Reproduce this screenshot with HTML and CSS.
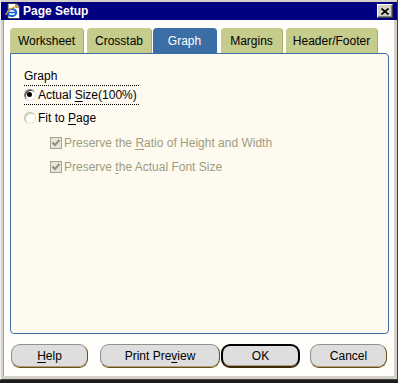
FILE: index.html
```html
<!DOCTYPE html>
<html>
<head>
<meta charset="utf-8">
<link rel="stylesheet" href="styles.css">
</head>
<body>
<div class="window">
  <div class="titlebar">
    <svg class="app-icon" width="16" height="16" viewBox="0 0 16 16">
      <path d="M3 0.5h8l3.5 3.5v11.5h-11.5z" fill="#fff" stroke="#404040"/>
      <path d="M11 0.5v3.5h3.5" fill="#e0e0e0" stroke="#404040"/>
      <ellipse cx="7" cy="9.5" rx="4.2" ry="3.6" fill="none" stroke="#1060e0" stroke-width="2"/>
      <path d="M3.5 9.5h7" stroke="#1060e0" stroke-width="1.6"/>
      <path d="M0.5 12c2-5 8-9 13-8" fill="none" stroke="#f0a020" stroke-width="1.2"/>
    </svg>
    <span class="title">Page Setup</span>
    <span class="close">
      <svg width="8" height="7" viewBox="0 0 8 7"><path d="M0.5 0.5l7 6M7.5 0.5l-7 6" stroke="#000" stroke-width="1.6"/></svg>
    </span>
  </div>
  <div class="client">
    <div class="tabs">
      <div class="tab tab-worksheet">Worksheet</div>
      <div class="tab tab-crosstab">Crosstab</div>
      <div class="tab tab-graph selected">Graph</div>
      <div class="tab tab-margins">Margins</div>
      <div class="tab tab-header">Header/Footer</div>
    </div>
    <div class="panel">
      <div class="group-label">Graph</div>
      <div class="option focused"><span class="radio checked"></span><span>Actual <u>S</u>ize(100%)</span></div>
      <div class="option option-fit"><span class="radio"></span><span>Fit to <u>P</u>age</span></div>
      <div class="option sub disabled option-ratio">
        <svg class="check" width="12" height="12" viewBox="0 0 12 12"><rect x="0.5" y="0.5" width="11" height="11" fill="#e6e6d8" stroke="#a4a48c"/><path d="M2.5 5.5l2.5 2.5 4.5-5" fill="none" stroke="#8a927a" stroke-width="2"/></svg>
        <span>Preserve the <u>R</u>atio of Height and Width</span>
      </div>
      <div class="option sub disabled option-font">
        <svg class="check" width="12" height="12" viewBox="0 0 12 12"><rect x="0.5" y="0.5" width="11" height="11" fill="#e6e6d8" stroke="#a4a48c"/><path d="M2.5 5.5l2.5 2.5 4.5-5" fill="none" stroke="#8a927a" stroke-width="2"/></svg>
        <span>Preserve <u>t</u>he Actual Font Size</span>
      </div>
    </div>
    <div class="buttons">
      <div class="btn btn-help"><u>H</u>elp</div>
      <div class="btn btn-preview">Print Pre<u>v</u>iew</div>
      <div class="btn btn-ok default">OK</div>
      <div class="btn btn-cancel">Cancel</div>
    </div>
  </div>
</div>
</body>
</html>
```
FILE: styles.css
```css
html, body {
  margin: 0;
  padding: 0;
}
body {
  width: 398px;
  height: 383px;
  overflow: hidden;
  background: #1c1c1c;
  font-family: "Liberation Sans", Arial, sans-serif;
  font-size: 12px;
  color: #000;
}
.window {
  width: 398px;
  height: 380px;
  box-sizing: border-box;
  background: #d4d0c8;
  border-left: 1px solid #f0f0f0;
  border-right: 1px solid #404040;
  border-bottom: 1px solid #404040;
  padding: 2px 0 3px 0;
  display: flex;
  flex-direction: column;
}
.titlebar {
  height: 18px;
  background: #000080;
  display: flex;
  align-items: center;
  padding: 0 4px 0 4px;
  color: #fff;
}
.app-icon {
  flex: none;
  margin-right: 2px;
}
.title {
  font-weight: bold;
  font-size: 12px;
  flex: 1;
}
.close {
  width: 16px;
  height: 14px;
  box-sizing: border-box;
  background: #d4d0c8;
  border: 1px solid;
  border-color: #fff #404040 #404040 #fff;
  box-shadow: inset -1px -1px 0 #808080;
  display: flex;
  align-items: center;
  justify-content: center;
}
.client {
  flex: 1;
  margin: 0 3px 0 2px;
  border-left: 1px solid #a0a0a0;
  background: #fffefb;
  padding: 8px 0 0 6px;
}
.tabs {
  display: flex;
  height: 25px;
  gap: 3px;
}
.tab {
  box-sizing: border-box;
  height: 25px;
  background: #c6cc8c;
  border-radius: 4px 4px 0 0;
  border-right: 1px solid #a8ae70;
  display: flex;
  align-items: center;
  justify-content: center;
  padding-top: 1px;
}
.tab-worksheet { width: 74px; }
.tab-crosstab { width: 65px; margin-right: -2px; }
.tab-graph { width: 64px; margin-right: 1px; }
.tab-margins { width: 62px; }
.tab-header { width: 92px; }
.tab.selected {
  background: #3b6ea5;
  border-right-color: #3b6ea5;
  color: #fff;
}
.panel {
  box-sizing: border-box;
  width: 379px;
  height: 281px;
  background: #fffaf0;
  border: 1px solid #3b6ea5;
  border-radius: 0 4px 4px 4px;
  padding: 15px 12px 0 13px;
  display: flex;
  flex-direction: column;
  align-items: flex-start;
}
.group-label {
  line-height: 14px;
  height: 14px;
}
.option {
  display: flex;
  align-items: center;
  line-height: 14px;
  height: 14px;
}
.option.focused {
  margin-top: 2px;
  height: 18px;
  border-top: 1px dotted #000;
  border-bottom: 1px dotted #000;
  padding-right: 2px;
}
.option-fit { margin-top: 6px; }
.option-ratio { margin-top: 11px; }
.option-font { margin-top: 10px; }
.option.sub { margin-left: 26px; }
.option.disabled { color: #9c9c7e; }
.radio {
  box-sizing: border-box;
  width: 12px;
  height: 12px;
  border-radius: 50%;
  border: 1px solid;
  border-color: #808080 #e8e8e0 #e8e8e0 #808080;
  background: #fff;
  box-shadow: inset 1px 1px 0 #404040;
  margin-right: 2px;
  position: relative;
  flex: none;
}
.radio.checked::after {
  content: "";
  position: absolute;
  left: 2px;
  top: 2px;
  width: 5px;
  height: 5px;
  border-radius: 50%;
  background: #000;
}
.option-fit .radio {
  border-color: #b8c0a0 #e0e8d0 #e0e8d0 #b8c0a0;
  box-shadow: inset 1px 1px 0 #d0d8c0;
}
.check {
  flex: none;
  margin-right: 2px;
}
.buttons {
  display: flex;
  margin-top: 10px;
  margin-left: 1px;
  height: 24px;
}
.btn {
  box-sizing: border-box;
  height: 24px;
  background: #dedede;
  border: 1px solid;
  border-color: #909090 #6a5018 #6a5018 #909090;
  box-shadow: inset 0 -1px 0 #b0a080;
  border-radius: 9px;
  display: flex;
  align-items: center;
  justify-content: center;
}
.btn-help { width: 77px; }
.btn-preview { width: 120px; margin-left: 12px; }
.btn-ok { width: 79px; margin-left: 1px; }
.btn-cancel { width: 77px; margin-left: 10px; }
.btn.default {
  border: 2px solid #000;
  border-bottom-color: #3a2a08;
}
u {
  text-underline-offset: 2px;
}
```
